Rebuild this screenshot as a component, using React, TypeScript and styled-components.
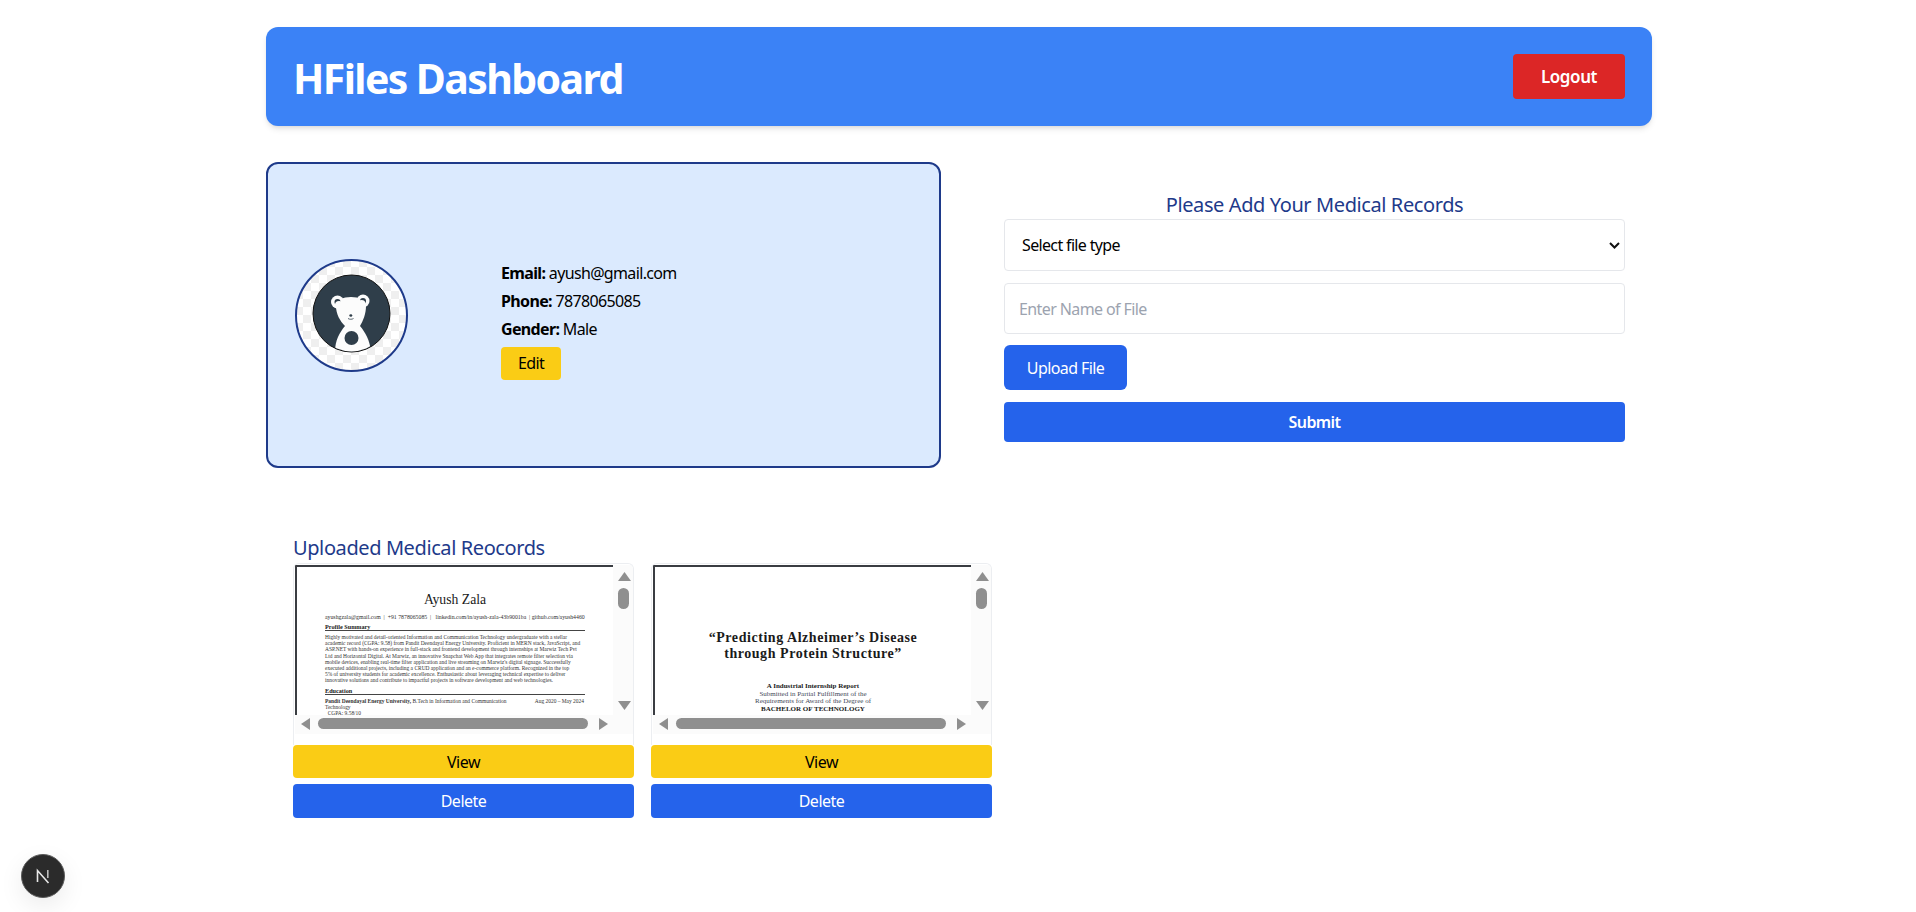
import React from "react";
import styled, { createGlobalStyle } from "styled-components";

const GlobalStyle = createGlobalStyle`
	html, body {
		margin: 0;
		padding: 0;
		background: #fff;
		font-family: "Noto Sans", "Open Sans", sans-serif;
		letter-spacing: -0.025em;
	}
	* {
		box-sizing: border-box;
	}
`;

const Page = styled.div`
	width: 1386px;
	margin: 0 264px 0 266px;
	padding-top: 27px;
	min-height: 912px;
`;

const Header = styled.header`
	display: flex;
	align-items: center;
	justify-content: space-between;
	height: 99px;
	padding: 0 27px 0 27px;
	background: #3b82f6;
	border-radius: 12px;
	box-shadow: 0 4px 6px -1px rgba(0, 0, 0, 0.1), 0 2px 4px -2px rgba(0, 0, 0, 0.1);
`;

const Title = styled.h1`
	margin: 2px 0 0;
	font-size: 41px;
	font-weight: 700;
	letter-spacing: -1.6px;
	color: #fff;
`;

const LogoutButton = styled.button`
	width: 112px;
	height: 45px;
	border: 0;
	border-radius: 4px;
	background: #dc2626;
	color: #fff;
	font: inherit;
	font-size: 17px;
	font-weight: 600;
	letter-spacing: -0.4px;
`;

const TopRow = styled.section`
	display: grid;
	grid-template-columns: 675px 621px;
	column-gap: 63px;
	margin-top: 36px;
`;

const ProfileCard = styled.div`
	display: flex;
	align-items: center;
	height: 306px;
	padding-left: 27px;
	background: #dbeafe;
	border: 2px solid #1e3a8a;
	border-radius: 12px;
`;

const Avatar = styled.svg`
	width: 113px;
	height: 113px;
	flex: none;
`;

const Details = styled.div`
	display: flex;
	flex-direction: column;
	margin-left: 93px;
	margin-top: 8px;
`;

const DetailLine = styled.p`
	margin: 0;
	height: 28px;
	line-height: 28px;
	font-size: 16px;
	letter-spacing: -0.65px;
	color: #000;
`;

const EditButton = styled.button`
	width: 60px;
	height: 33px;
	margin-top: 4px;
	border: 0;
	border-radius: 4px;
	background: #facc15;
	color: #000;
	font: inherit;
	font-size: 16px;
	letter-spacing: -0.6px;
`;

const UploadForm = styled.form`
	display: flex;
	flex-direction: column;
	align-items: stretch;
	padding-top: 29px;
`;

const FormTitle = styled.h2`
	margin: 0;
	height: 28px;
	line-height: 28px;
	font-size: 20px;
	font-weight: 400;
	text-align: center;
	color: #1e3a8a;
`;

const SelectField = styled.div`
	position: relative;
	display: flex;
`;

const FileSelect = styled.select`
	flex: 1;
	height: 52px;
	padding: 0 24px 0 17px;
	appearance: none;
	background: #fff;
	border: 1px solid #e5e7eb;
	border-radius: 4px;
	color: #000;
	font: inherit;
	font-size: 16px;
	letter-spacing: -0.65px;
`;

const SelectChevron = styled.svg`
	position: absolute;
	right: 5px;
	top: 23px;
	width: 11px;
	height: 7px;
	pointer-events: none;
`;

const NameInput = styled.input`
	height: 51px;
	margin-top: 12px;
	padding: 0 14px;
	border: 1px solid #e5e7eb;
	border-radius: 4px;
	font: inherit;
	font-size: 16px;
	letter-spacing: -0.6px;
	&::placeholder {
		color: #9ca3af;
	}
`;

const UploadButton = styled.button`
	align-self: flex-start;
	width: 123px;
	height: 45px;
	margin-top: 11px;
	border: 0;
	border-radius: 6px;
	background: #2563eb;
	color: #fff;
	font: inherit;
	font-size: 16px;
	letter-spacing: -0.6px;
`;

const SubmitButton = styled.button`
	height: 40px;
	margin-top: 12px;
	border: 0;
	border-radius: 4px;
	background: #2563eb;
	color: #fff;
	font: inherit;
	font-size: 16px;
	font-weight: 600;
	letter-spacing: -0.6px;
`;

const RecordsSection = styled.section`
	margin-top: 66px;
	padding-left: 27px;
`;

const RecordsTitle = styled.h2`
	margin: 0;
	height: 28px;
	line-height: 28px;
	font-size: 20px;
	font-weight: 400;
	color: #1e3a8a;
`;

const RecordsGrid = styled.div`
	display: grid;
	grid-template-columns: repeat(2, 341px);
	column-gap: 17px;
	margin-top: 1px;
`;

const RecordCard = styled.article`
	display: flex;
	flex-direction: column;
`;

const Preview = styled.div`
	display: grid;
	grid-template-columns: minmax(0, 1fr) 20px;
	grid-template-rows: 150px 19px;
	height: 182px;
	padding: 1px 0 0 1px;
	background: #fff;
	border: 1px solid #eceef1;
	border-bottom: 0;
	border-radius: 6px 6px 0 0;
	overflow: hidden;
`;

const PaperPage = styled.div`
	overflow: hidden;
	background: #fff;
	border-top: 2px solid #3a3d42;
	border-left: 2px solid #3a3d42;
	font-family: "Liberation Serif", serif;
	letter-spacing: 0;
	color: #1a1a1a;
`;

const VerticalBar = styled.div`
	position: relative;
	background: #fbfbfb;
	grid-column: 2;
	grid-row: 1 / span 2;
`;

const HorizontalBar = styled.div`
	position: relative;
	background: #fbfbfb;
	grid-column: 1;
	grid-row: 2;
`;

const Thumb = styled.div<{ $vertical?: boolean }>`
	position: absolute;
	background: #8f8f8f;
	border-radius: 6px;
	${p =>
		p.$vertical
			? "left: 5px; top: 23px; width: 11px; height: 21px;"
			: "left: 23px; top: 3px; width: 270px; height: 11px;"}
`;

const ArrowUp = styled.svg`
	position: absolute;
	left: 5px;
	top: 7px;
	width: 13px;
	height: 9px;
	fill: #8f8f8f;
`;

const ArrowDown = styled(ArrowUp)`
	top: 136px;
`;

const ArrowLeft = styled.svg`
	position: absolute;
	left: 6px;
	top: 3px;
	width: 9px;
	height: 12px;
	fill: #8f8f8f;
`;

const ArrowRight = styled(ArrowLeft)`
	left: 304px;
`;

const ResumeSheet = styled.div`
	padding: 25px 0 0 28px;
	width: 310px;
`;

const ResumeName = styled.div`
	height: 15px;
	line-height: 15px;
	font-size: 13.7px;
	text-align: center;
	width: 260px;
`;

const ResumeContact = styled.div`
	margin-top: 7px;
	height: 7px;
	line-height: 7px;
	font-size: 5.8px;
	white-space: nowrap;
	color: #2f2f2f;
`;

const ResumeHeading = styled.div`
	margin-top: 2px;
	width: 260px;
	height: 8px;
	line-height: 7px;
	font-size: 6.2px;
	font-weight: 700;
	border-bottom: 1.5px solid #444;
`;

const ResumeText = styled.div`
	margin-top: 3px;
	width: 262px;
	line-height: 6.2px;
	font-size: 5.45px;
	white-space: nowrap;
	color: #333;
`;

const ResumeGap = styled.div`
	height: 1px;
`;

const ResumeRow = styled.div`
	display: flex;
	justify-content: space-between;
	width: 259px;
`;

const ReportSheet = styled.div`
	display: flex;
	flex-direction: column;
	align-items: center;
	padding-top: 63px;
	width: 100%;
`;

const ReportTitle = styled.div`
	font-size: 14px;
	line-height: 16px;
	font-weight: 700;
	text-align: center;
	letter-spacing: 0.55px;
	white-space: nowrap;
`;

const ReportLine = styled.div<{ $bold?: boolean }>`
	font-size: 7px;
	line-height: 7.6px;
	white-space: nowrap;
	font-weight: ${p => (p.$bold ? 700 : 400)};
	color: ${p => (p.$bold ? "#1a1a1a" : "#3f4a5a")};
`;

const ReportSpacer = styled.div`
	height: 21px;
`;

const ActionButton = styled.button<{ $tone: "view" | "delete" }>`
	height: ${p => (p.$tone === "view" ? "33px" : "34px")};
	border: 0;
	border-radius: 4px;
	font: inherit;
	font-size: 16px;
	letter-spacing: -0.5px;
	background: ${p => (p.$tone === "view" ? "#facc15" : "#2563eb")};
	color: ${p => (p.$tone === "view" ? "#000" : "#fff")};
	margin-top: ${p => (p.$tone === "view" ? "0" : "6px")};
`;

const DevBadge = styled.div`
	position: fixed;
	left: 21px;
	top: 854px;
	display: flex;
	align-items: center;
	justify-content: center;
	width: 44px;
	height: 44px;
	border-radius: 50%;
	background: #2b2b2b;
	border: 1px solid #5a5a5a;
	box-shadow: 0 8px 24px rgba(0, 0, 0, 0.08);
`;

const BearAvatar = () => (
	<Avatar viewBox="0 0 113 113">
		<defs>
			<pattern id="checks" width="16" height="16" patternUnits="userSpaceOnUse">
				<rect width="16" height="16" fill="#fff" />
				<rect width="8" height="8" fill="#efefef" />
				<rect x="8" y="8" width="8" height="8" fill="#efefef" />
			</pattern>
			<clipPath id="disc">
				<circle cx="56.5" cy="54.5" r="38" />
			</clipPath>
		</defs>
		<circle cx="56.5" cy="56.5" r="55.5" fill="url(#checks)" stroke="#1e3a8a" strokeWidth="2" />
		<circle cx="56.5" cy="54.5" r="38.5" fill="#2f3e4a" stroke="#111" strokeWidth="1" />
		<g clipPath="url(#disc)" fill="#fcfcfc">
			<circle cx="42.5" cy="43" r="6.5" />
			<circle cx="68" cy="42" r="6.5" />
			<path d="M41 47c0-6 7-9 15-9s15 3 15 9c0 8-3 15-6 20 5 6 10 14 11 26H40c0-12 5-20 10-26-5-5-9-12-9-20z" />
			<circle cx="56.5" cy="79" r="7" fill="#2f3e4a" />
			<circle cx="42.5" cy="43" r="3" fill="#2f3e4a" />
			<circle cx="68" cy="42" r="3" fill="#2f3e4a" />
			<circle cx="44" cy="46" r="4" />
			<circle cx="66.5" cy="45" r="4" />
			<ellipse cx="55.8" cy="56.5" rx="1.5" ry="1.2" fill="#2f3e4a" />
			<path d="M53 59.5c1.5 1 4 1 5.5 0" fill="none" stroke="#2f3e4a" strokeWidth="0.8" />
		</g>
	</Avatar>
);

const Scrollbars = () => (
	<>
		<VerticalBar>
			<ArrowUp viewBox="0 0 13 9">
				<path d="M6.5 0l6.5 9H0z" />
			</ArrowUp>
			<Thumb $vertical />
			<ArrowDown viewBox="0 0 13 9">
				<path d="M0 0h13L6.5 9z" />
			</ArrowDown>
		</VerticalBar>
		<HorizontalBar>
			<ArrowLeft viewBox="0 0 9 12">
				<path d="M9 0v12L0 6z" />
			</ArrowLeft>
			<Thumb />
			<ArrowRight viewBox="0 0 9 12">
				<path d="M0 0v12l9-6z" />
			</ArrowRight>
		</HorizontalBar>
	</>
);

const ResumePreview = () => (
	<Preview>
		<PaperPage>
			<ResumeSheet>
				<ResumeName>Ayush Zala</ResumeName>
				<ResumeContact>
					ayushgzala@gmail.com &nbsp;| &nbsp;+91 7878065085 &nbsp;| &nbsp; linkedin.com/in/ayush-zala-43b9001ba &nbsp;| github.com/ayush4460
				</ResumeContact>
				<ResumeHeading>Profile Summary</ResumeHeading>
				<ResumeText>
					Highly motivated and detail-oriented Information and Communication Technology undergraduate with a stellar<br />
					academic record (CGPA: 9.58) from Pandit Deendayal Energy University. Proficient in MERN stack, JavaScript, and<br />
					ASP.NET with hands-on experience in full-stack and frontend development through internships at Marwiz Tech Pvt<br />
					Ltd and Horizontal Digital. At Marwiz, an innovative Snapchat Web App that integrates remote filter selection via<br />
					mobile devices, enabling real-time filter application and live streaming on Marwiz's digital signage. Successfully<br />
					executed additional projects, including a CRUD application and an e-commerce platform. Recognized in the top<br />
					5% of university students for academic excellence. Enthusiastic about leveraging technical expertise to deliver<br />
					innovative solutions and contribute to impactful projects in software development and web technologies.
				</ResumeText>
				<ResumeGap />
				<ResumeHeading>Education</ResumeHeading>
				<ResumeText>
					<ResumeRow>
						<span><b>Pandit Deendayal Energy University,</b> B.Tech in Information and Communication</span>
						<span>Aug 2020 – May 2024</span>
					</ResumeRow>
					Technology<br />
					&nbsp;&nbsp;CGPA: 9.58/10
				</ResumeText>
			</ResumeSheet>
		</PaperPage>
		<Scrollbars />
	</Preview>
);

const ReportPreview = () => (
	<Preview>
		<PaperPage>
			<ReportSheet>
				<ReportTitle>
					“Predicting Alzheimer’s Disease<br />
					through Protein Structure”
				</ReportTitle>
				<ReportSpacer />
				<ReportLine $bold>A Industrial Internship Report</ReportLine>
				<ReportLine>Submitted in Partial Fulfillment of the</ReportLine>
				<ReportLine>Requirements for Award of the Degree of</ReportLine>
				<ReportLine $bold>BACHELOR OF TECHNOLOGY</ReportLine>
			</ReportSheet>
		</PaperPage>
		<Scrollbars />
	</Preview>
);

const App: React.FC = () => {
	return (
		<>
			<GlobalStyle />
			<Page>
				<Header>
					<Title>HFiles Dashboard</Title>
					<LogoutButton>Logout</LogoutButton>
				</Header>
				<TopRow>
					<ProfileCard>
						<BearAvatar />
						<Details>
							<DetailLine><b>Email:</b> ayush@gmail.com</DetailLine>
							<DetailLine><b>Phone:</b> 7878065085</DetailLine>
							<DetailLine><b>Gender:</b> Male</DetailLine>
							<div>
								<EditButton type="button">Edit</EditButton>
							</div>
						</Details>
					</ProfileCard>
					<UploadForm>
						<FormTitle>Please Add Your Medical Records</FormTitle>
						<SelectField>
							<FileSelect defaultValue="">
								<option value="">Select file type</option>
							</FileSelect>
							<SelectChevron viewBox="0 0 11 7" fill="none">
								<path d="M1 1l4.5 4.5L10 1" stroke="#111" strokeWidth="2" />
							</SelectChevron>
						</SelectField>
						<NameInput placeholder="Enter Name of File" />
						<UploadButton type="button">Upload File</UploadButton>
						<SubmitButton type="button">Submit</SubmitButton>
					</UploadForm>
				</TopRow>
				<RecordsSection>
					<RecordsTitle>Uploaded Medical Reocords</RecordsTitle>
					<RecordsGrid>
						<RecordCard>
							<ResumePreview />
							<ActionButton $tone="view">View</ActionButton>
							<ActionButton $tone="delete">Delete</ActionButton>
						</RecordCard>
						<RecordCard>
							<ReportPreview />
							<ActionButton $tone="view">View</ActionButton>
							<ActionButton $tone="delete">Delete</ActionButton>
						</RecordCard>
					</RecordsGrid>
				</RecordsSection>
			</Page>
			<DevBadge>
				<svg width="20" height="20" viewBox="0 0 20 20" fill="none">
					<path d="M4.5 16V4.5L15.5 17" stroke="#e8e8e8" strokeWidth="1.6" />
					<path d="M14.8 4v8" stroke="#bcbcbc" strokeWidth="1.6" />
				</svg>
			</DevBadge>
		</>
	);
};

export default App;
